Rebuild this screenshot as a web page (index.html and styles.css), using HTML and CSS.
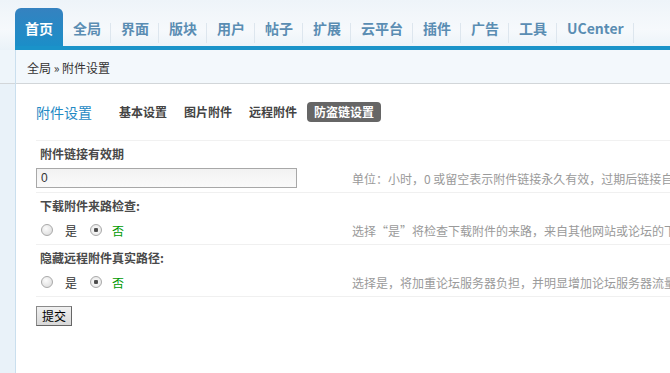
FILE: index.html
```html
<!DOCTYPE html>
<html lang="zh-CN">
<head>
  <meta charset="UTF-8" />
  <title>附件设置</title>
  <link rel="stylesheet" href="styles.css">
</head>
<body>
  <div class="header">
    <ul class="nav">
      <li class="active">首页</li>
      <li>全局</li>
      <li>界面</li>
      <li>版块</li>
      <li>用户</li>
      <li>帖子</li>
      <li>扩展</li>
      <li>云平台</li>
      <li>插件</li>
      <li>广告</li>
      <li>工具</li>
      <li>UCenter</li>
    </ul>
  </div>

  <div class="layout">
    <div class="side">
      <div class="side-top"></div>
    </div>
    <div class="main">
      <div class="crumb">全局 &raquo; 附件设置</div>

      <div class="content">
        <div class="tabs">
          <h3>附件设置</h3>
          <a>基本设置</a>
          <a>图片附件</a>
          <a>远程附件</a>
          <a class="current">防盗链设置</a>
        </div>

        <div class="section">
          <div class="label">附件链接有效期</div>
          <div class="value">
            <div class="field"><input type="text" class="txt" value="0" /></div>
            <div class="tip">单位：小时，0 或留空表示附件链接永久有效，过期后链接自</div>
          </div>
        </div>

        <div class="section">
          <div class="label">下载附件来路检查:</div>
          <div class="value">
            <div class="field">
              <label class="radio"><input type="radio" name="check" /> 是</label>
              <label class="radio on"><input type="radio" name="check" checked /> 否</label>
            </div>
            <div class="tip">选择“是”将检查下载附件的来路，来自其他网站或论坛的下</div>
          </div>
        </div>

        <div class="section">
          <div class="label">隐藏远程附件真实路径:</div>
          <div class="value">
            <div class="field">
              <label class="radio"><input type="radio" name="hide" /> 是</label>
              <label class="radio on"><input type="radio" name="hide" checked /> 否</label>
            </div>
            <div class="tip">选择是，将加重论坛服务器负担，并明显增加论坛服务器流量</div>
          </div>
        </div>

        <button class="btn">提交</button>
      </div>
    </div>
  </div>
</body>
</html>
```

FILE: styles.css
```css
html, body {
  margin: 0;
  padding: 0;
  height: 100%;
  overflow: hidden;
}

body {
  font-family: "Noto Sans CJK SC", "Liberation Sans", sans-serif;
  font-size: 12px;
  color: #333;
  background: #fff;
}

.header {
  height: 50px;
  background: linear-gradient(to bottom, #eef4f9, #f6f9fc 60%, #eaf2f8);
  padding-left: 15px;
  box-sizing: border-box;
}

.nav {
  list-style: none;
  margin: 0;
  padding: 8px 0 0;
  height: 50px;
  box-sizing: border-box;
  display: flex;
  border-bottom: 4px solid #1a93c9;
}

.nav li {
  height: 38px;
  line-height: 40px;
  padding: 0 10px;
  font-size: 14px;
  font-weight: bold;
  color: #5a8db3;
  white-space: nowrap;
  position: relative;
}

.nav li::after {
  content: "";
  position: absolute;
  right: 0;
  top: 15px;
  height: 20px;
  border-right: 1px solid #dde6ee;
}

.nav li.active {
  color: #fff;
  background: linear-gradient(to bottom, #3582c0, #1b8ec8);
  border-radius: 6px 6px 0 0;
}

.nav li.active::after {
  display: none;
}

.layout {
  display: flex;
  height: calc(100% - 50px);
}

.side {
  width: 15px;
  background: #e9f2f9;
  border-right: 1px solid #cadfee;
  flex-shrink: 0;
}

.side-top {
  height: 33px;
  border-bottom: 1px solid #d2d6d9;
  background: #eef5fa;
}

.main {
  flex: 1;
  min-width: 0;
}

.crumb {
  height: 33px;
  line-height: 35px;
  padding-left: 11px;
  border-bottom: 1px solid #d2d6d9;
  background: #f3f8fc;
  color: #333;
}

.content {
  padding: 0 0 0 20px;
}

.tabs {
  display: flex;
  align-items: center;
  height: 56px;
  border-bottom: 1px solid #f1f1f1;
  white-space: nowrap;
}

.tabs h3 {
  margin: 0 20px 0 0;
  font-size: 14px;
  font-weight: normal;
  color: #1f89c4;
}

.tabs a {
  font-weight: bold;
  color: #444;
  padding: 1px 7px 2px;
  margin-right: 3px;
  border-radius: 4px;
}

.tabs a.current {
  background: #666;
  color: #fff;
}

.section {
  border-bottom: 1px solid #f0f0f0;
  height: 51px;
}

.label {
  height: 24px;
  line-height: 25px;
  padding-left: 4px;
  font-weight: bold;
  color: #4a4a4a;
}

.value {
  display: flex;
  align-items: center;
  height: 26px;
  white-space: nowrap;
  overflow: hidden;
}

.field {
  width: 316px;
  flex-shrink: 0;
  display: flex;
  align-items: center;
}

.txt {
  width: 261px;
  height: 20px;
  box-sizing: border-box;
  border: 1px solid #a8a8a8;
  background: linear-gradient(to bottom, #f2f2f2, #fafafa);
  padding: 0 4px;
  font-family: "Liberation Sans", sans-serif;
  font-size: 12px;
  color: #333;
}

.tip {
  color: #9a9a9a;
}

.radio {
  display: flex;
  align-items: center;
  margin-left: 5px;
  margin-right: 8px;
  color: #333;
}

.radio.on {
  color: #090;
}

.radio input {
  appearance: none;
  -webkit-appearance: none;
  width: 12px;
  height: 12px;
  margin: 0 12px 0 0;
  border: 1px solid #a9a9a9;
  border-radius: 50%;
  background: radial-gradient(circle at 40% 35%, #fcfcfc, #d7d7d7);
  box-sizing: border-box;
}

.radio.on input {
  margin-right: 10px;
}

.radio input:checked {
  background: radial-gradient(circle, #444 0, #555 2px, #f4f4f4 2.5px, #e2e2e2 100%);
}

.btn {
  margin-top: 9px;
  height: 20px;
  padding: 0 5px;
  border: 1px solid #8a8a8a;
  border-right-color: #666;
  border-bottom-color: #666;
  background: linear-gradient(to bottom, #f0f0f0, #d8d8d8);
  font-family: "Noto Sans CJK SC", sans-serif;
  font-size: 12px;
  line-height: 16px;
  color: #000;
  border-radius: 0;
}
```
